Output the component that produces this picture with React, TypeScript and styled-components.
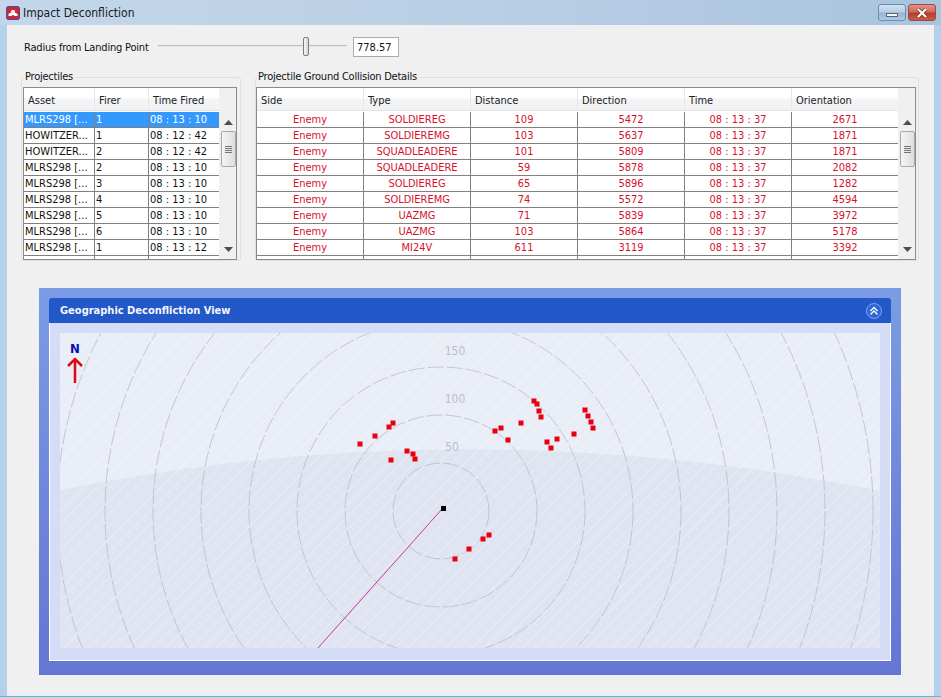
import React from 'react'
import styled, { createGlobalStyle } from 'styled-components'

const FONT = '"DejaVu Sans Condensed", "DejaVu Sans", sans-serif'

const GlobalStyle = createGlobalStyle`
  html, body {
    margin: 0;
    padding: 0;
    background: #f0f0f0;
    overflow: hidden;
  }
  * {
    box-sizing: border-box;
  }
`

const Frame = styled.div`
  width: 941px;
  height: 697px;
  display: flex;
  flex-direction: column;
  background: #b4d1ec;
  border-bottom: 1px solid #3cc8e0;
  font-family: ${FONT};
  font-size: 11px;
  color: #111;
`

const TitleBar = styled.div`
  height: 25px;
  flex: none;
  display: flex;
  align-items: center;
  padding: 0 5px 0 6px;
  background: linear-gradient(90deg, #c4d7ea 0%, #b9cfe5 50%, #a9c4df 100%);
`

const TitleText = styled.span`
  margin-left: 3px;
  font-size: 12px;
  color: #1a1a1a;
  flex: 1;
`

const WindowButton = styled.div<{ $close?: boolean }>`
  width: 28px;
  height: 17px;
  margin-left: 2px;
  display: flex;
  align-items: center;
  justify-content: center;
  border: 1px solid ${({ $close }) => ($close ? '#a0483c' : '#6f8cab')};
  border-radius: 3px;
  background: ${({ $close }) =>
    $close
      ? 'linear-gradient(180deg, #e0948a 0%, #cf6a5c 45%, #b53d2c 55%, #c65b4a 100%)'
      : 'linear-gradient(180deg, #d0e0f0 0%, #b9cfe6 45%, #99b4d2 55%, #aecbe6 100%)'};
`

const MinimizeGlyph = styled.div`
  width: 12px;
  height: 4px;
  margin-top: 5px;
  background: #f4f7fb;
  border: 1px solid #50657d;
`

const Content = styled.div`
  flex: 1;
  margin: 0 7px;
  background: #f0f0f0;
  border-bottom: 4px solid #e8eff7;
  min-height: 0;
`

const ControlRow = styled.div`
  display: flex;
  align-items: center;
  height: 20px;
  margin-top: 12px;
  padding-left: 17px;
`

const SliderLabel = styled.span`
  width: 134px;
  flex: none;
  white-space: nowrap;
  letter-spacing: -0.2px;
`

const SliderTrack = styled.div`
  position: relative;
  width: 189px;
  height: 20px;
  flex: none;
`

const SliderLine = styled.div`
  position: absolute;
  left: 0;
  right: 0;
  top: 8px;
  height: 2px;
  background: #bdbdbd;
  border-bottom: 1px solid #e8e8e8;
`

const SliderThumb = styled.div`
  position: absolute;
  top: 0;
  width: 6px;
  height: 19px;
  margin-left: -3px;
  border: 1px solid #7c7c7c;
  border-radius: 2px;
  background: linear-gradient(90deg, #f8f8f8, #d4d4d4);
`

const ValueInput = styled.input`
  width: 46px;
  height: 20px;
  margin-left: 6px;
  padding: 0 3px;
  border: 1px solid #ababab;
  background: #fff;
  font-family: ${FONT};
  font-size: 11px;
  color: #111;
  outline: none;
`

const GroupRow = styled.div`
  display: flex;
  gap: 14px;
  margin-top: 13px;
  padding-left: 14px;
`

const GroupBox = styled.fieldset<{ $width: number; $inset: number; $end: number }>`
  width: ${({ $width }) => $width}px;
  height: 191px;
  margin: 0;
  padding: 0 ${({ $end }) => $end}px 0 ${({ $inset }) => $inset}px;
  border: 1px solid #dfdfdf;
  border-radius: 3px;
  min-width: 0;
`

const GroupLegend = styled.legend`
  margin-left: 1px;
  padding: 0 1px;
  font-size: 11px;
  line-height: 14px;
  letter-spacing: -0.23px;
  color: #111;
`

const TableFrame = styled.div`
  display: flex;
  height: 173px;
  margin-top: 3px;
  border: 1px solid #8a8a8a;
  background: #fff;
  overflow: hidden;
`

const TableBody = styled.div`
  flex: 1;
  min-width: 0;
`

const HeaderRow = styled.div<{ $columns: string }>`
  display: grid;
  grid-template-columns: ${({ $columns }) => $columns};
  height: 23px;
  margin-bottom: 1px;
  background: linear-gradient(180deg, #ffffff 0%, #ffffff 45%, #f2f4f6 50%, #f1f2f4 100%);
  border-bottom: 1px solid #e3e5e8;
`

const HeaderCell = styled.div`
  display: flex;
  align-items: center;
  padding: 2px 0 0 4px;
  border-right: 1px solid #e4e6ea;
  color: #222;
  white-space: nowrap;
`

const DataRow = styled.div<{ $columns: string; $selected?: boolean }>`
  display: grid;
  grid-template-columns: ${({ $columns }) => $columns};
  height: 16px;
  border-bottom: 1px solid #808080;
  background: ${({ $selected }) => ($selected ? '#3399ff' : '#fff')};
  color: ${({ $selected }) => ($selected ? '#fff' : '#111')};
`

const DataCell = styled.div<{ $centered?: boolean }>`
  display: flex;
  align-items: center;
  justify-content: ${({ $centered }) => ($centered ? 'center' : 'flex-start')};
  padding-left: ${({ $centered }) => ($centered ? '0' : '1px')};
  border-right: 1px solid #808080;
  color: ${({ $centered }) => ($centered ? '#d8102c' : 'inherit')};
  font-size: 11px;
  line-height: 15px;
  white-space: nowrap;
  overflow: hidden;
`

const ScrollBar = styled.div`
  width: 17px;
  flex: none;
  display: flex;
  flex-direction: column;
  align-items: center;
  background: #f0f0f0;
  padding: 32px 0 7px 2px;
`

const ScrollArrow = styled.svg`
  width: 9px;
  height: 5px;
  flex: none;
  display: block;
`

const ScrollThumb = styled.div`
  width: 15px;
  height: 36px;
  margin-top: 6px;
  margin-bottom: auto;
  display: flex;
  flex-direction: column;
  align-items: center;
  justify-content: center;
  gap: 1px;
  border: 1px solid #a9a9a9;
  border-radius: 2px;
  background: linear-gradient(90deg, #f4f4f4, #dedede);
`

const GripLine = styled.div`
  width: 7px;
  height: 1px;
  background: #777;
`

const Panel = styled.section`
  width: 862px;
  height: 387px;
  margin: 27px 0 0 32px;
  padding: 10px;
  background: linear-gradient(180deg, #7b9ce4 0%, #6575d3 100%);
`

const PanelHeader = styled.header`
  height: 25px;
  display: flex;
  align-items: center;
  justify-content: space-between;
  padding: 0 9px 0 11px;
  border-radius: 3px 3px 0 0;
  background: #2358c8;
  color: #f2f6ff;
  font-size: 11px;
  font-weight: 700;
`

const PanelBody = styled.div`
  height: 338px;
  padding: 10px;
  background: #d5ddf6;
  border: 1px solid #fff;
  border-top: none;
`

const MapSvg = styled.svg`
  display: block;
  width: 820px;
  height: 315px;
`

const CollapseIcon = styled.svg`
  width: 16px;
  height: 16px;
  display: block;
`

const leftColumns = '71px 54px 71px'
const rightColumns = '107px 107px 107px 107px 107px 107px'

const leftHeaders = ['Asset', 'Firer', 'Time Fired']
const rightHeaders = ['Side', 'Type', 'Distance', 'Direction', 'Time', 'Orientation']

const projectiles = [
  ['MLRS298 [...', '1', '08 : 13 : 10'],
  ['HOWITZER...', '1', '08 : 12 : 42'],
  ['HOWITZER...', '2', '08 : 12 : 42'],
  ['MLRS298 [...', '2', '08 : 13 : 10'],
  ['MLRS298 [...', '3', '08 : 13 : 10'],
  ['MLRS298 [...', '4', '08 : 13 : 10'],
  ['MLRS298 [...', '5', '08 : 13 : 10'],
  ['MLRS298 [...', '6', '08 : 13 : 10'],
  ['MLRS298 [...', '1', '08 : 13 : 12'],
  ['', '', ''],
]

const collisions = [
  ['Enemy', 'SOLDIEREG', '109', '5472', '08 : 13 : 37', '2671'],
  ['Enemy', 'SOLDIEREMG', '103', '5637', '08 : 13 : 37', '1871'],
  ['Enemy', 'SQUADLEADERE', '101', '5809', '08 : 13 : 37', '1871'],
  ['Enemy', 'SQUADLEADERE', '59', '5878', '08 : 13 : 37', '2082'],
  ['Enemy', 'SOLDIEREG', '65', '5896', '08 : 13 : 37', '1282'],
  ['Enemy', 'SOLDIEREMG', '74', '5572', '08 : 13 : 37', '4594'],
  ['Enemy', 'UAZMG', '71', '5839', '08 : 13 : 37', '3972'],
  ['Enemy', 'UAZMG', '103', '5864', '08 : 13 : 37', '5178'],
  ['Enemy', 'MI24V', '611', '3119', '08 : 13 : 37', '3392'],
  ['', '', '', '', '', ''],
]

// impact points, in page coordinates of the screenshot
const impacts = [
  [534, 401], [537, 404], [539, 411], [541, 417], [585, 410], [588, 416], [591, 422],
  [593, 428], [574, 434], [557, 439], [547, 442], [551, 448], [521, 423], [501, 428],
  [495, 431], [508, 440], [393, 423], [389, 427], [375, 436], [360, 444], [407, 451],
  [413, 454], [415, 459], [391, 460], [489, 535], [483, 539], [469, 549], [455, 559],
]

const MAP_X = 60
const MAP_Y = 333
const RING_RADII = [48, 96, 144, 192, 240, 288, 336, 384, 432]

const AppIcon = () => (
  <svg width="14" height="14" viewBox="0 0 14 14">
    <rect x="0.5" y="0.5" width="13" height="13" rx="2" fill="#d8232a" stroke="#2a4fc0" />
    <path d="M2.500 10V8L5 6.500 5.500 4H8.500L9 6.500 11.500 8V10H8.500L7.500 9H6.500L5.500 10Z" fill="#fff" />
  </svg>
)

const CloseGlyph = () => (
  <svg width="12" height="10" viewBox="0 0 12 10">
    <path d="M2 1L10 9M10 1L2 9" stroke="#6e2a22" strokeWidth="3.4" />
    <path d="M2 1L10 9M10 1L2 9" stroke="#fff" strokeWidth="2.2" />
  </svg>
)

const UpArrow = () => (
  <ScrollArrow viewBox="0 0 9 5">
    <path d="M4.500 0L9 5H0Z" fill="#4d4d4d" />
  </ScrollArrow>
)

const DownArrow = () => (
  <ScrollArrow viewBox="0 0 9 5">
    <path d="M0 0H9L4.500 5Z" fill="#4d4d4d" />
  </ScrollArrow>
)

const TableScroll = () => (
  <ScrollBar>
    <UpArrow />
    <ScrollThumb>
      <GripLine />
      <GripLine />
      <GripLine />
      <GripLine />
    </ScrollThumb>
    <DownArrow />
  </ScrollBar>
)

const Slider: React.FC<{ value: number; max: number }> = ({ value, max }) => (
  <SliderTrack>
    <SliderLine />
    <SliderThumb style={{ left: `${(value / max) * 100}%` }} />
  </SliderTrack>
)

interface DataTableProps {
  columns: string
  headers: string[]
  rows: string[][]
  centered?: boolean
  selectedRow?: number
}

const DataTable: React.FC<DataTableProps> = ({ columns, headers, rows, centered, selectedRow }) => (
  <TableFrame>
    <TableBody>
      <HeaderRow $columns={columns}>
        {headers.map(h => (
          <HeaderCell key={h}>{h}</HeaderCell>
        ))}
      </HeaderRow>
      {rows.map((row, i) => (
        <DataRow key={i} $columns={columns} $selected={i === selectedRow}>
          {row.map((cell, j) => (
            <DataCell key={j} $centered={centered}>
              {cell}
            </DataCell>
          ))}
        </DataRow>
      ))}
    </TableBody>
    <TableScroll />
  </TableFrame>
)

const DeconflictionMap = () => (
  <MapSvg viewBox="0 0 820 315">
    <defs>
      <pattern id="hatch" width="9" height="9" patternUnits="userSpaceOnUse" patternTransform="rotate(45)">
        <rect width="9" height="9" fill="none" />
        <line x1="0" y1="0" x2="0" y2="9" stroke="#ffffff" strokeOpacity="0.3" strokeWidth="2" />
      </pattern>
    </defs>
    <rect width="820" height="315" fill="#e9edf6" />
    <path d="M0 157Q410 75 820 158V315H0Z" fill="#dfe4f0" />
    <rect width="820" height="315" fill="url(#hatch)" />
    {RING_RADII.map(r => (
      <circle key={r} cx="381" cy="178" r={r} fill="none" stroke="#bfc2ca" strokeWidth="0.9" strokeDasharray="16 3" />
    ))}
    <text x="392" y="118" textAnchor="middle" fontFamily={FONT} fontSize="12" fill="#bcbfc7">50</text>
    <text x="395" y="70" textAnchor="middle" fontFamily={FONT} fontSize="12" fill="#bcbfc7">100</text>
    <text x="395" y="22" textAnchor="middle" fontFamily={FONT} fontSize="12" fill="#bcbfc7">150</text>
    <line x1="383" y1="175" x2="258" y2="315" stroke="#c436a4" strokeWidth="1" />
    {impacts.map(([x, y]) => (
      <rect key={`${x}-${y}`} x={x - MAP_X - 2.5} y={y - MAP_Y - 2.5} width="5" height="5" fill="#e8000e" />
    ))}
    <rect x="381" y="173" width="5" height="5" fill="#000" />
    <text x="15" y="20" textAnchor="middle" fontFamily={FONT} fontSize="13" fontWeight="700" fill="#0a0ab8">N</text>
    <path d="M15 50V26M8 33L15 26 22 33" fill="none" stroke="#e30613" strokeWidth="2.500" />
  </MapSvg>
)

export default function App() {
  return (
    <Frame>
      <GlobalStyle />
      <TitleBar>
        <AppIcon />
        <TitleText>Impact Deconfliction</TitleText>
        <WindowButton>
          <MinimizeGlyph />
        </WindowButton>
        <WindowButton $close>
          <CloseGlyph />
        </WindowButton>
      </TitleBar>
      <Content>
        <ControlRow>
          <SliderLabel>Radius from Landing Point</SliderLabel>
          <Slider value={148} max={189} />
          <ValueInput readOnly value="778.57" />
        </ControlRow>
        <GroupRow>
          <GroupBox $width={220} $inset={1} $end={3}>
            <GroupLegend>Projectiles</GroupLegend>
            <DataTable columns={leftColumns} headers={leftHeaders} rows={projectiles} selectedRow={0} />
          </GroupBox>
          <GroupBox $width={664} $inset={0} $end={2}>
            <GroupLegend>Projectile Ground Collision Details</GroupLegend>
            <DataTable columns={rightColumns} headers={rightHeaders} rows={collisions} centered />
          </GroupBox>
        </GroupRow>
        <Panel>
          <PanelHeader>
            Geographic Deconfliction View
            <CollapseIcon viewBox="0 0 16 16">
              <circle cx="8" cy="8" r="7.500" fill="#2f66d6" stroke="#7fa4ea" />
              <path d="M4.500 8L8 4.500 11.500 8M4.500 11.500L8 8 11.500 11.500" fill="none" stroke="#fff" strokeWidth="1.300" />
            </CollapseIcon>
          </PanelHeader>
          <PanelBody>
            <DeconflictionMap />
          </PanelBody>
        </Panel>
      </Content>
    </Frame>
  )
}
